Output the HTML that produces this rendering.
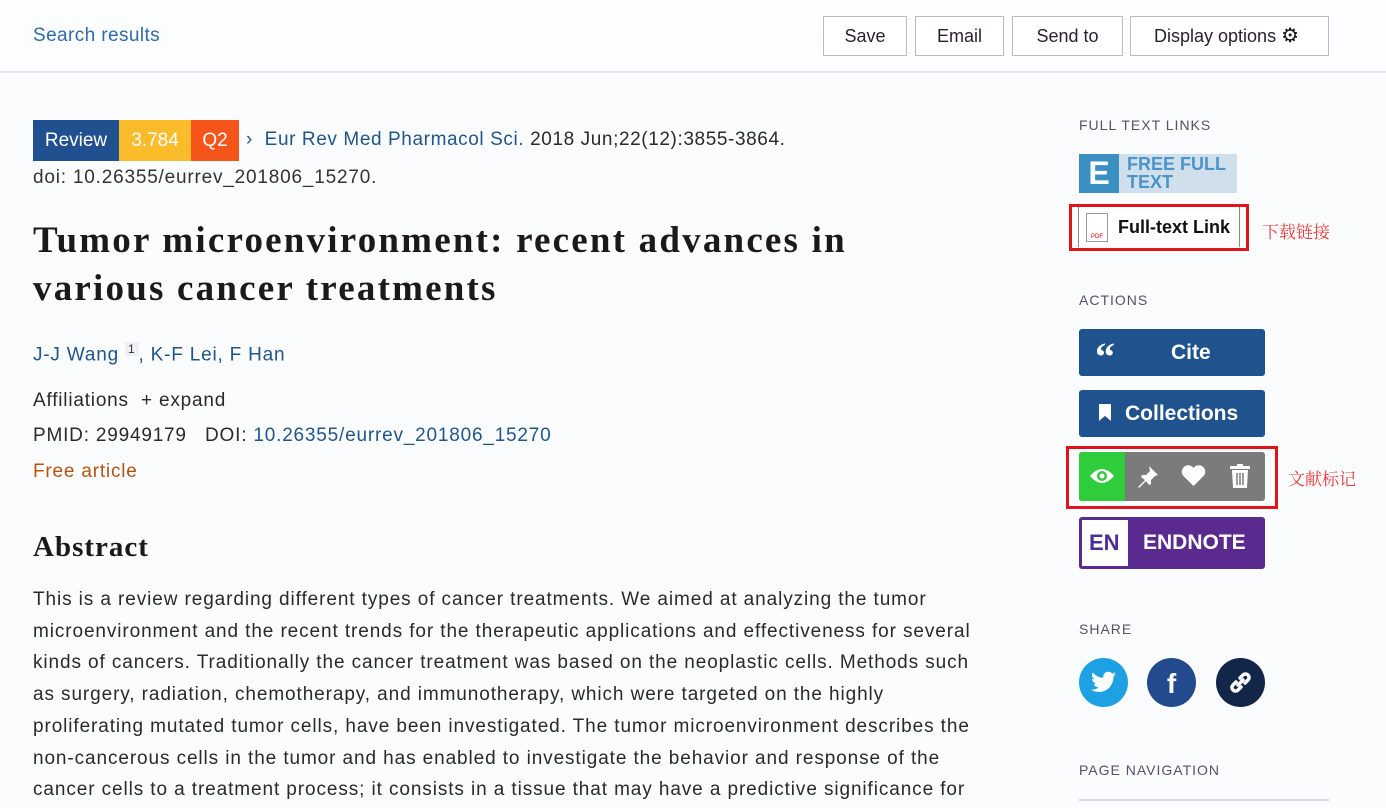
<!DOCTYPE html>
<html><head><meta charset="utf-8"><style>
*{margin:0;padding:0;box-sizing:border-box}
body{width:1386px;height:808px;overflow:hidden;background:#fbfcfe;font-family:"Liberation Sans",sans-serif;color:#212121;position:relative}
.a{position:absolute;white-space:nowrap}
.hdr{position:absolute;left:0;top:0;width:1386px;height:73px;border-bottom:2px solid #e3e6ea;background:#fcfdfe}
.btn{position:absolute;top:16px;height:40px;border:1px solid #b9bcc1;background:#fff;font-size:18px;color:#2a2030;text-align:center;line-height:38px}
.lnk{color:#20558a}
.lab{font-size:14px;color:#5b4f66;letter-spacing:1px}
.blue{position:absolute;left:1079px;width:186px;height:47px;background:#20528e;border-radius:3px;color:#fff;font-weight:bold;font-size:21px}
.p{font-size:19px;line-height:31.7px;color:#2a2a2a;letter-spacing:0.9px}
.t{font-size:19px;letter-spacing:0.8px}
</style></head><body>
<div class="hdr"></div>
<div class="a t" style="left:33px;top:25px;color:#2f6aa8;letter-spacing:0.4px">Search results</div>
<div class="btn" style="left:823px;width:84px">Save</div>
<div class="btn" style="left:915px;width:89px">Email</div>
<div class="btn" style="left:1012px;width:111px">Send to</div>
<div class="btn" style="left:1130px;width:199px;text-align:left;padding-left:23px">Display options <span style="font-size:20px;color:#111">⚙</span></div>

<div class="a" style="left:33px;top:120px;height:41px;width:86px;background:#20508f;color:#fff;font-size:19px;line-height:41px;text-align:center">Review</div>
<div class="a" style="left:119px;top:120px;height:41px;width:72px;background:#fbbc2b;color:#fff;font-size:19px;line-height:41px;text-align:center">3.784</div>
<div class="a" style="left:191px;top:120px;height:41px;width:48px;background:#f5551b;color:#fff;font-size:19px;line-height:41px;text-align:center">Q2</div>
<div class="a t" style="left:246px;top:129px;color:#2a2a2a;letter-spacing:0.6px"><span class="lnk">›&nbsp; Eur Rev Med Pharmacol Sci.</span> 2018 Jun;22(12):3855-3864.</div>
<div class="a t" style="left:33px;top:167px;color:#333">doi: 10.26355/eurrev_201806_15270.</div>
<div class="a" style="left:33px;top:217px;font-family:'Liberation Serif',serif;font-weight:bold;font-size:37px;line-height:48px;color:#1a1a1a;letter-spacing:2.2px">Tumor microenvironment: recent advances in<br>various cancer treatments</div>
<div class="a lnk t" style="left:33px;top:342px">J-J Wang <sup style="font-size:12px;color:#333;background:#eef0f3;padding:0 3px">1</sup>, K-F Lei, F Han</div>
<div class="a t" style="left:33px;top:390px;color:#2a2a2a">Affiliations &nbsp;+ expand</div>
<div class="a t" style="left:33px;top:425px;color:#2a2a2a">PMID: 29949179 &nbsp;&nbsp;DOI: <span class="lnk">10.26355/eurrev_201806_15270</span></div>
<div class="a t" style="left:33px;top:461px;color:#b5530f">Free article</div>
<div class="a" style="left:33px;top:531px;font-family:'Liberation Serif',serif;font-weight:bold;font-size:29px;color:#1a1a1a;letter-spacing:1px">Abstract</div>
<div class="a p" style="left:33px;top:584px">This is a review regarding different types of cancer treatments. We aimed at analyzing the tumor<br>microenvironment and the recent trends for the therapeutic applications and effectiveness for several<br>kinds of cancers. Traditionally the cancer treatment was based on the neoplastic cells. Methods such<br>as surgery, radiation, chemotherapy, and immunotherapy, which were targeted on the highly<br>proliferating mutated tumor cells, have been investigated. The tumor microenvironment describes the<br>non-cancerous cells in the tumor and has enabled to investigate the behavior and response of the<br>cancer cells to a treatment process; it consists in a tissue that may have a predictive significance for</div>

<div class="a lab" style="left:1079px;top:117px">FULL TEXT LINKS</div>
<div class="a" style="left:1079px;top:154px;width:158px;height:39px;background:#cfe0ec"></div>
<div class="a" style="left:1079px;top:154px;width:40px;height:39px;background:#3a8fc3;color:#fff;font-weight:bold;font-size:32px;line-height:39px;text-align:center">E</div>
<div class="a" style="left:1127px;top:155px;font-weight:bold;font-size:18px;line-height:18px;color:#4b93c8">FREE FULL<br>TEXT</div>
<div class="a" style="left:1069px;top:204px;width:180px;height:47px;border:3px solid #e2141b"></div>
<div class="a" style="left:1078px;top:207px;width:162px;height:40px;border-left:1px solid #888;border-right:1px solid #888;background:#fff"></div>
<div class="a" style="left:1086px;top:213px;width:22px;height:29px;border:1px solid #999;background:#fff;font-size:6px;color:#c00;text-align:center;line-height:46px">PDF</div>
<div class="a" style="left:1118px;top:217px;font-size:18px;font-weight:bold;color:#111">Full-text Link</div>
<div class="a" style="left:1262px;top:218px;font-family:'Noto Serif CJK SC',serif;font-size:17px;color:#e63a3a">下载链接</div>

<div class="a lab" style="left:1079px;top:292px">ACTIONS</div>
<div class="blue" style="top:329px"><span class="a" style="left:16px;top:4px;font-family:'Liberation Serif',serif;font-size:40px">“</span><span class="a" style="left:92px;top:12px">Cite</span></div>
<div class="blue" style="top:390px"><span class="a" style="left:20px;top:14px;width:12px;height:17px;background:#fff;clip-path:polygon(0 0,100% 0,100% 100%,50% 70%,0 100%)"></span><span class="a" style="left:46px;top:12px">Collections</span></div>
<div class="a" style="left:1066px;top:446px;width:212px;height:63px;border:3px solid #e2141b"></div>
<div class="a" style="left:1079px;top:452px;width:186px;height:49px;background:#7b7b7b;border-radius:3px"></div>
<div class="a" style="left:1079px;top:452px;width:46px;height:49px;background:#2fcc3c;border-radius:3px 0 0 3px;text-align:center">
<svg width="26" height="18" viewBox="0 0 26 18" style="margin-top:15px"><path d="M1 9Q13-5 25 9Q13 23 1 9Z" fill="#fff"/><circle cx="13" cy="9" r="5" fill="#2fcc3c"/><circle cx="13" cy="9" r="2.5" fill="#fff"/></svg></div>
<svg class="a" style="left:1136px;top:464px" width="24" height="24" viewBox="0 0 24 24"><path d="M13 2l9 9-3 1-4 4 0 4-2 1-3-4-7 7-1-1 7-7-4-3 1-2 4 0 4-4z" fill="#fff"/></svg>
<svg class="a" style="left:1181px;top:465px" width="25" height="22" viewBox="0 0 25 22"><path d="M12.5 21L2 10.5A6 6 0 0 1 12.5 3A6 6 0 0 1 23 10.5Z" fill="#fff"/></svg>
<svg class="a" style="left:1230px;top:464px" width="20" height="24" viewBox="0 0 20 24"><rect x="0" y="2" width="20" height="3" fill="#fff"/><rect x="7" y="0" width="6" height="3" fill="#fff"/><path d="M2 6h16l-1 18H3Z" fill="#fff"/><path d="M7 9v12M10 9v12M13 9v12" stroke="#7b7b7b" stroke-width="1.5"/></svg>
<div class="a" style="left:1288px;top:465px;font-family:'Noto Serif CJK SC',serif;font-size:17px;color:#e63a3a">文献标记</div>
<div class="a" style="left:1079px;top:517px;width:186px;height:52px;background:#5a2a8e;border-radius:3px"></div>
<div class="a" style="left:1082px;top:520px;width:46px;height:46px;background:#fff;color:#4b2d9a;font-weight:bold;font-size:22px;line-height:46px;padding-left:7px">EN</div>
<div class="a" style="left:1143px;top:531px;color:#fff;font-weight:bold;font-size:21px">ENDNOTE</div>

<div class="a lab" style="left:1079px;top:621px">SHARE</div>
<div class="a" style="left:1079px;top:658px;width:49px;height:49px;border-radius:50%;background:#1da1e2"></div>
<svg class="a" style="left:1091px;top:671px" width="25" height="22" viewBox="0 0 24 20"><path d="M24 2.4a10 10 0 0 1-2.8.8A5 5 0 0 0 23.3.5a10 10 0 0 1-3.1 1.2A4.9 4.9 0 0 0 11.8 6 14 14 0 0 1 1.7.9a4.9 4.9 0 0 0 1.5 6.6A4.9 4.9 0 0 1 1 6.9a4.9 4.9 0 0 0 3.9 4.8 4.9 4.9 0 0 1-2.2.1 4.9 4.9 0 0 0 4.6 3.4A9.9 9.9 0 0 1 0 17.3 14 14 0 0 0 7.5 19.5c9.1 0 14-7.5 14-14v-.6A10 10 0 0 0 24 2.4z" fill="#fff"/></svg>
<div class="a" style="left:1147px;top:658px;width:49px;height:49px;border-radius:50%;background:#234a8c;color:#fff;font-weight:bold;font-size:28px;text-align:center;line-height:52px">f</div>
<div class="a" style="left:1216px;top:658px;width:49px;height:49px;border-radius:50%;background:#12264a"></div>
<svg class="a" style="left:1226px;top:668px" width="29" height="29" viewBox="0 0 29 29"><g fill="none" stroke="#fff" stroke-width="3.5" stroke-linecap="round"><path d="M12 17l5-5"/><path d="M10 14l-3 3a3.5 3.5 0 0 0 5 5l3-3"/><path d="M19 15l3-3a3.5 3.5 0 0 0-5-5l-3 3"/></g></svg>
<div class="a lab" style="left:1079px;top:762px">PAGE NAVIGATION</div>
<div class="a" style="left:1079px;top:799px;width:250px;height:2px;background:#d7dbe0"></div>
</body></html>
